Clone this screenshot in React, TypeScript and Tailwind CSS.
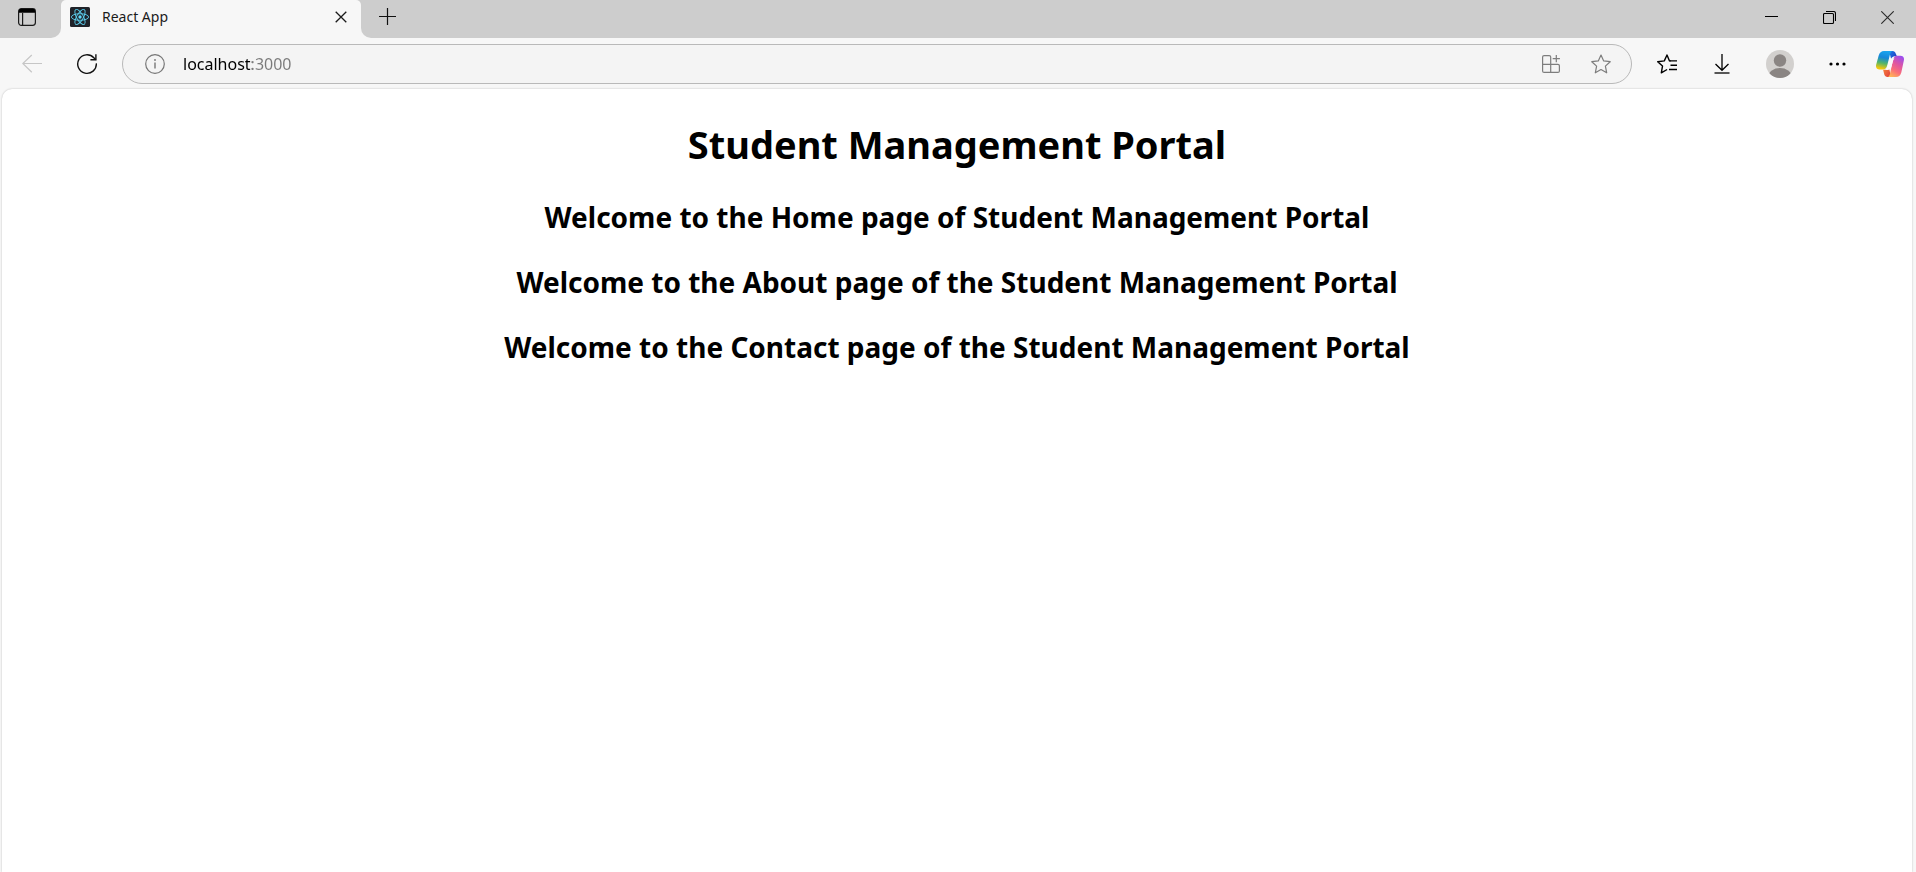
import React from "react";

const iconButton = "flex shrink-0 items-center justify-center";

function ReactLogo() {
  return (
    <svg width="20" height="20" viewBox="0 0 20 20" aria-hidden="true">
      <rect width="20" height="20" rx="1.5" fill="#20232a" />
      <g fill="none" stroke="#5ccfee" strokeWidth="0.9">
        <ellipse cx="10" cy="10" rx="8.6" ry="3.3" />
        <ellipse cx="10" cy="10" rx="8.6" ry="3.3" transform="rotate(60 10 10)" />
        <ellipse cx="10" cy="10" rx="8.6" ry="3.3" transform="rotate(120 10 10)" />
      </g>
      <circle cx="10" cy="10" r="1.7" fill="#61dafb" />
    </svg>
  );
}

function CopilotLogo() {
  return (
    <svg width="28" height="26" viewBox="0 0 28 26" aria-hidden="true">
      <defs>
        <linearGradient id="cp-left" x1="0.5" y1="0" x2="0.3" y2="1">
          <stop offset="0" stopColor="#1aa4ee" />
          <stop offset="0.35" stopColor="#1687d8" />
          <stop offset="0.65" stopColor="#52b46a" />
          <stop offset="0.95" stopColor="#f2c70c" />
        </linearGradient>
        <linearGradient id="cp-top" x1="0" y1="0" x2="1" y2="0.6">
          <stop offset="0" stopColor="#1b7fe8" />
          <stop offset="1" stopColor="#1f3fc4" />
        </linearGradient>
        <linearGradient id="cp-right" x1="0.8" y1="0" x2="0.3" y2="1">
          <stop offset="0" stopColor="#9a4df0" />
          <stop offset="0.4" stopColor="#e0569f" />
          <stop offset="0.7" stopColor="#fa6f78" />
          <stop offset="1" stopColor="#ffb457" />
        </linearGradient>
        <linearGradient id="cp-bottom" x1="0" y1="0" x2="1" y2="0.8">
          <stop offset="0" stopColor="#f7873c" />
          <stop offset="1" stopColor="#e2403c" />
        </linearGradient>
      </defs>
      <path d="M13 0h3.500c1.700 0 2.700.9 3.200 2.500l1.200 2.700h-2.100c-1.800 0-3 .8-3.700 2.600z" fill="url(#cp-top)" />
      <path d="M15 26h-3.500c-1.700 0-2.700-.9-3.200-2.500l-1.200-4.700h2.100c1.800 0 3-.8 3.700-2.600z" fill="url(#cp-bottom)" />
      <path d="M8 0h9c-1.400 0-2.300 1-2.800 2.600L11.200 14.600c-.8 2.500-2 3.900-4.300 3.900H3.500c-2.700 0-4.100-2-3.300-5L2.700 4.500C3.600 1.500 5.300 0 8 0z" fill="url(#cp-left)" />
      <path d="M20 26h-9c1.400 0 2.300-1 2.800-2.600l3.200-14.500c.7-2.700 1.900-4.200 4.200-4.200h3.300c2.700 0 4.100 2 3.300 5L25.300 21.500c-.9 3-2.600 4.500-5.300 4.500z" fill="url(#cp-right)" />
      <path d="M12.800 10.800c.7-2.300 1.900-3.300 4-3.300h1.800c-.9.500-1.300 1.500-1.700 3l-1.500 5.200c-.7 2.200-1.900 3.300-4 3.300H9.300c1.100-.6 1.600-1.800 2-3.300z" fill="#fafafa" />
    </svg>
  );
}

function TabStrip() {
  return (
    <header className="flex h-[38px] items-stretch">
      <div className="flex w-[61px] shrink-0 rounded-br-[10px] bg-[#cdcdcd] pl-2">
        <button type="button" aria-label="Tab actions" className={`${iconButton} h-[34px] w-[38px]`}>
          <svg width="18" height="18" viewBox="0 0 18 18" fill="none" stroke="#1a1a1a" strokeWidth="1.2">
            <rect x="0.6" y="0.6" width="16.800" height="16.800" rx="2.800" />
            <path d="M1 2.500C1 1.500 1.600 1 2.600 1h12.800c1 0 1.600.5 1.600 1.500v2.300H1z" fill="#000" stroke="none" />
            <path d="M4.600 5v12.400" />
          </svg>
        </button>
      </div>
      <div className="w-[300px] shrink-0 bg-[#cdcdcd]">
        <div className="flex h-full rounded-t-[5px] bg-[#f7f7f7] pr-2 pb-1 pl-[9px]">
          <div className="flex flex-1 items-center gap-3">
            <ReactLogo />
            <span className="text-[14px] leading-5 text-[#1b1b1b]">React App</span>
          </div>
          <button type="button" aria-label="Close tab" className={`${iconButton} w-6`}>
            <svg width="12" height="12" viewBox="0 0 12 12" stroke="#1a1a1a" strokeWidth="1.300">
              <path d="M0.700 0.700l10.600 10.600M11.300 0.700L0.700 11.300" />
            </svg>
          </button>
        </div>
      </div>
      <div className="flex flex-1 justify-between rounded-bl-[10px] bg-[#cdcdcd]">
        <button type="button" aria-label="New tab" className={`${iconButton} ml-2 h-[33px] w-[37px]`}>
          <svg width="17" height="17" viewBox="0 0 17 17" stroke="#111" strokeWidth="1.200">
            <path d="M8.500 0v17M0 8.500h17" />
          </svg>
        </button>
        <div className="flex h-[35px]">
          <button type="button" aria-label="Minimize" className={`${iconButton} w-[58px]`}>
            <svg width="13" height="13" viewBox="0 0 13 13" stroke="#000" strokeWidth="1">
              <path d="M0 5.500h13" />
            </svg>
          </button>
          <button type="button" aria-label="Restore" className={`${iconButton} w-[58px]`}>
            <svg width="13" height="13" viewBox="0 0 13 13" fill="none" stroke="#000" strokeWidth="1.100">
              <rect x="0.500" y="2.500" width="10" height="10" rx="1" />
              <path d="M3 0.500h7.500c1.200 0 2 .8 2 2V10" />
            </svg>
          </button>
          <button type="button" aria-label="Close" className={`${iconButton} w-[58px]`}>
            <svg width="13" height="13" viewBox="0 0 13 13" stroke="#2a2a2a" strokeWidth="1.100">
              <path d="M0.300 0.300l12.400 12.400M12.700 0.300L0.300 12.700" />
            </svg>
          </button>
        </div>
      </div>
    </header>
  );
}

function Toolbar() {
  return (
    <nav aria-label="Browser toolbar" className="flex items-center pt-1.5 pb-[5px]">
      <button type="button" aria-label="Back" disabled className={`${iconButton} h-10 w-16`}>
        <svg width="20" height="20" viewBox="0 0 20 20" fill="none" stroke="#c6c6c6" strokeWidth="1.200">
          <path d="M20 9.500H0.800M9.800 1L0.800 9.500l9 8.800" />
        </svg>
      </button>
      <button type="button" aria-label="Refresh" className={`${iconButton} h-10 w-[46px]`}>
        <svg width="22" height="22" viewBox="0 0 22 22" fill="none" stroke="#111" strokeWidth="1.400">
          <path d="M20.300 10.400A9.300 9.300 0 1 1 17.800 4.700l2 2.100" />
          <path d="M19.900 1.300v5.500h-5.500" />
        </svg>
      </button>
      <form
        role="search"
        onSubmit={(e) => e.preventDefault()}
        className="ml-3 flex h-10 flex-1 items-center rounded-full border border-[#b9b9b9] bg-[#f4f4f4] pr-[5px] pl-3"
      >
        <button type="button" aria-label="View site information" className={`${iconButton} h-9 w-10`}>
          <svg width="20" height="20" viewBox="0 0 20 20" fill="none" stroke="#767676">
            <circle cx="10" cy="10" r="9.300" strokeWidth="1.200" />
            <path d="M10 8.500v6" strokeWidth="1.400" />
            <circle cx="10" cy="6" r="0.900" fill="#767676" stroke="none" />
          </svg>
        </button>
        <input
          aria-label="Address"
          type="text"
          defaultValue="localhost:3000"
          className="ml-2 h-9 min-w-0 flex-1 bg-[linear-gradient(90deg,#000_69px,#7a7a7a_69px)] bg-clip-text text-[16px] leading-6 text-transparent outline-none"
        />
        <button type="button" aria-label="Install app" className={`${iconButton} h-9 w-[50px]`}>
          <svg width="18" height="18" viewBox="0 0 18 18" fill="none" stroke="#7d7d7d" strokeWidth="1.200">
            <path d="M8.700 17.400V2.100C8.700 1.200 8.100.6 7.200.6H2.100C1.200.6.6 1.200.6 2.100v13.800c0 .9.600 1.500 1.500 1.500h13.800c.9 0 1.500-.6 1.500-1.500v-5.100c0-.9-.6-1.500-1.500-1.500H.6" />
            <path d="M14.300 0v7.200M10.700 3.600h7.200" />
          </svg>
        </button>
        <button type="button" aria-label="Add to favorites" className={`${iconButton} h-9 w-[50px]`}>
          <svg width="20" height="20" viewBox="0 0 20 20" fill="none" stroke="#7d7d7d" strokeWidth="1.200" strokeLinejoin="round">
            <path d="M10 1l2.700 5.900 6.500.8-4.800 4.400 1.300 6.700L10 15.500l-5.700 3.300 1.300-6.700L.8 7.700l6.500-.8z" />
          </svg>
        </button>
      </form>
      <div className="flex items-center pl-2">
        <button type="button" aria-label="Favorites" className={`${iconButton} h-10 w-[54px]`}>
          <svg width="21" height="20" viewBox="0 0 21 20" fill="none" stroke="#000" strokeWidth="1.400" strokeLinejoin="round">
            <path d="M13.700 6.900h-1.200L10 1 7.300 6.900l-6.600.8 4.800 4.400-1.200 6.700 5.800-3.300" />
            <path d="M12.500 6.900h7.500M13.500 11.200h6.500M12 15.500h8" />
          </svg>
        </button>
        <button type="button" aria-label="Downloads" className={`${iconButton} h-10 w-14`}>
          <svg width="16" height="20" viewBox="0 0 16 20" fill="none" stroke="#000" strokeWidth="1.300">
            <path d="M8 0v16M1.500 10L8 16.300 14.500 10" />
            <path d="M0.500 19h15" />
          </svg>
        </button>
        <button type="button" aria-label="Profile" className={`${iconButton} h-10 w-[60px]`}>
          <svg width="28" height="28" viewBox="0 0 28 28">
            <defs>
              <clipPath id="avatar-clip">
                <circle cx="14" cy="14" r="14" />
              </clipPath>
            </defs>
            <circle cx="14" cy="14" r="14" fill="#d2d0ce" />
            <circle cx="14" cy="10.500" r="6.200" fill="#8a8583" />
            <ellipse cx="14" cy="26.500" rx="11.500" ry="8.500" fill="#8a8583" clipPath="url(#avatar-clip)" />
          </svg>
        </button>
        <button type="button" aria-label="Settings and more" className={`${iconButton} h-10 w-[54px]`}>
          <svg width="17" height="4" viewBox="0 0 17 4" fill="#000">
            <circle cx="2" cy="2" r="1.600" />
            <circle cx="8.500" cy="2" r="1.600" />
            <circle cx="15" cy="2" r="1.600" />
          </svg>
        </button>
        <button type="button" aria-label="Copilot" className={`${iconButton} h-10 w-[52px]`}>
          <CopilotLogo />
        </button>
      </div>
    </nav>
  );
}

const sections = [
  "Welcome to the Home page of Student Management Portal",
  "Welcome to the About page of the Student Management Portal",
  "Welcome to the Contact page of the Student Management Portal",
];

export default function App() {
  return (
    <div className="flex min-h-screen flex-col bg-[#f7f7f7] font-['Noto_Sans','Open_Sans',sans-serif]">
      <TabStrip />
      <Toolbar />
      <main className="mr-1 ml-0.5 flex-1 rounded-t-[10px] bg-white pt-7 text-center font-bold text-black shadow-[0_0_2px_rgba(0,0,0,0.25)]">
        <h1 className="text-[38px] leading-[54px]">Student Management Portal</h1>
        <div className="mt-[26px] flex flex-col gap-[25px]">
          {sections.map((text) => (
            <h2 key={text} className="text-[28px] leading-10">
              {text}
            </h2>
          ))}
        </div>
      </main>
    </div>
  );
}
